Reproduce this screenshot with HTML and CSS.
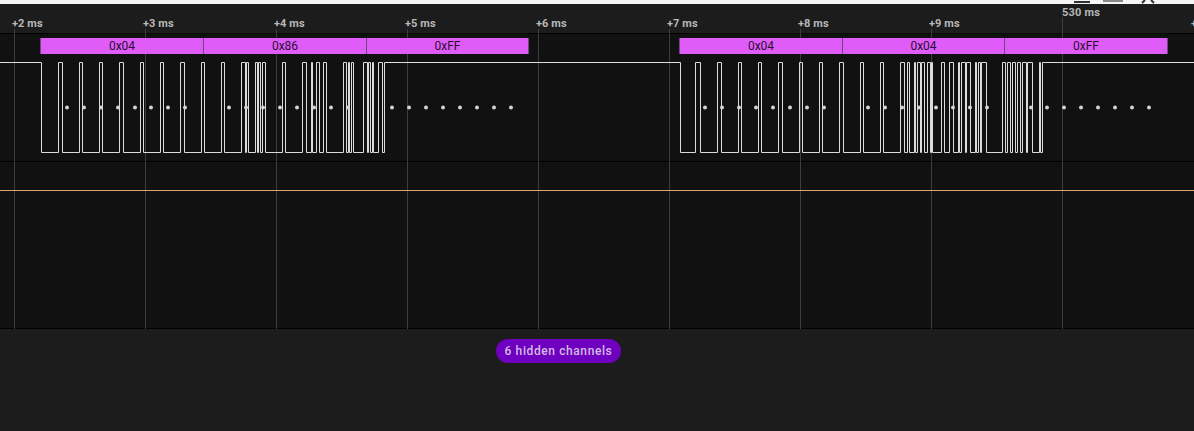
FILE: index.html
```html
<!DOCTYPE html>
<html lang="en">
<head>
    <meta charset="UTF-8">
    <title>Logic analyzer capture</title>
    <link rel="stylesheet" href="styles.css">
</head>
<body>
    <div class="topline"></div>

    <!-- window buttons, cut off by the top of the page -->
    <svg class="window-icons" width="134" height="4" viewBox="0 0 134 4">
        <rect x="14" y="1" width="16" height="2" fill="#333"/>
        <rect x="43" y="0" width="20" height="2" fill="#888"/>
        <path d="M82 3 L85 0 M94 3 L91 0" stroke="#333" stroke-width="2"/>
    </svg>

    <div class="ruler">
        <span class="tick-label">+2 ms</span>
        <span class="tick-label">+3 ms</span>
        <span class="tick-label">+4 ms</span>
        <span class="tick-label">+5 ms</span>
        <span class="tick-label">+6 ms</span>
        <span class="tick-label">+7 ms</span>
        <span class="tick-label">+8 ms</span>
        <span class="tick-label">+9 ms</span>
        <span class="tick-label tick-skip"></span>
        <span class="tick-label">+</span>
        <span class="abs-time">530 ms</span>
    </div>

    <div class="tracks">
        <div class="track track-spi">
            <div class="decode">
                <div class="byte-group first">
                    <div class="byte">0x04</div>
                    <div class="byte">0x86</div>
                    <div class="byte">0xFF</div>
                </div>
                <div class="byte-group second">
                    <div class="byte">0x04</div>
                    <div class="byte byte-short">0x04</div>
                    <div class="byte byte-long">0xFF</div>
                </div>
            </div>
        </div>
        <div class="track track-flat"></div>

        <!-- grid, waveform and sample dots drawn over both tracks -->
        <svg class="scope" width="1194" height="312" viewBox="0 17 1194 312">
            <g stroke="#3c3c42" stroke-width="1">
                <path d="M14.5 29V329M145.5 29V329M276.5 29V329M407.5 29V329M538.5 29V329M669.5 29V329M800.5 29V329M931.5 29V329M1062.5 17V329"/>
            </g>
            <path d="M0 190.5H1194" stroke="#e0a870" stroke-width="1"/>
            <path id="wave" fill="none" stroke="#dcdcdc" stroke-width="1" d="M0 62.5H41.5V152.5H58.5V62.5H62.5V152.5H79.5V62.5H82.5V152.5H99.5V62.5H102.5V152.5H119.5V62.5H123.5V152.5H140.5V62.5H143.5V152.5H160.5V62.5H163.5V152.5H180.5V62.5H184.5V152.5H201.5V62.5H204.5V152.5H221.5V62.5H224.5V152.5H241.5V62.5H245.5V152.5H246.5V62.5H248.5V152.5H255.5V62.5H257.5V152.5H258.5V62.5H260.5V152.5H262.5V62.5H265.5V152.5H282.5V62.5H285.5V152.5H302.5V62.5H306.5V152.5H311.5V62.5H312.5V152.5H316.5V62.5H319.5V152.5H323.5V62.5H326.5V152.5H343.5V62.5H346.5V152.5H348.5V62.5H349.5V152.5H351.5V62.5H353.5V152.5H363.5V62.5H367.5V152.5H368.5V62.5H370.5V152.5H372.5V62.5H373.5V152.5H378.5V62.5H382.5V152.5H384.5V62.5H680.5V152.5H695.5V62.5H700.5V152.5H717.5V62.5H721.5V152.5H738.5V62.5H741.5V152.5H758.5V62.5H761.5V152.5H778.5V62.5H782.5V152.5H799.5V62.5H802.5V152.5H819.5V62.5H822.5V152.5H839.5V62.5H843.5V152.5H860.5V62.5H863.5V152.5H880.5V62.5H883.5V152.5H900.5V62.5H904.5V152.5H907.5V62.5H909.5V152.5H914.5V62.5H915.5V152.5H917.5V62.5H920.5V152.5H921.5V62.5H924.5V152.5H927.5V62.5H930.5V152.5H931.5V62.5H932.5V152.5H941.5V62.5H944.5V152.5H949.5V62.5H953.5V152.5H958.5V62.5H959.5V152.5H961.5V62.5H965.5V152.5H966.5V62.5H970.5V152.5H975.5V62.5H976.5V152.5H978.5V62.5H980.5V152.5H981.5V62.5H986.5V152.5H1002.5V62.5H1005.5V152.5H1007.5V62.5H1010.5V152.5H1012.5V62.5H1015.5V152.5H1017.5V62.5H1020.5V152.5H1022.5V62.5H1026.5V152.5H1027.5V62.5H1032.5V152.5H1039.5V62.5H1040.5V152.5H1042.5V62.5H1194"/>
            <g fill="#d4d4d4">
                <circle cx="67" cy="107.5" r="2"/><circle cx="84" cy="107.5" r="2"/><circle cx="101" cy="107.5" r="2"/><circle cx="118" cy="107.5" r="2"/><circle cx="135" cy="107.5" r="2"/><circle cx="151" cy="107.5" r="2"/><circle cx="168" cy="107.5" r="2"/><circle cx="185" cy="107.5" r="2"/>
                <circle cx="229" cy="107.5" r="2"/><circle cx="246" cy="107.5" r="2"/><circle cx="263" cy="107.5" r="2"/><circle cx="280" cy="107.5" r="2"/><circle cx="297" cy="107.5" r="2"/><circle cx="314" cy="107.5" r="2"/><circle cx="331" cy="107.5" r="2"/><circle cx="348" cy="107.5" r="2"/>
                <circle cx="392" cy="107.5" r="2"/><circle cx="409" cy="107.5" r="2"/><circle cx="426" cy="107.5" r="2"/><circle cx="443" cy="107.5" r="2"/><circle cx="460" cy="107.5" r="2"/><circle cx="477" cy="107.5" r="2"/><circle cx="494" cy="107.5" r="2"/><circle cx="511" cy="107.5" r="2"/>
                <circle cx="705" cy="107.5" r="2"/><circle cx="722" cy="107.5" r="2"/><circle cx="739" cy="107.5" r="2"/><circle cx="756" cy="107.5" r="2"/><circle cx="773" cy="107.5" r="2"/><circle cx="790" cy="107.5" r="2"/><circle cx="807" cy="107.5" r="2"/><circle cx="824" cy="107.5" r="2"/>
                <circle cx="868" cy="107.5" r="2"/><circle cx="885" cy="107.5" r="2"/><circle cx="902" cy="107.5" r="2"/><circle cx="919" cy="107.5" r="2"/><circle cx="936" cy="107.5" r="2"/><circle cx="953" cy="107.5" r="2"/><circle cx="970" cy="107.5" r="2"/><circle cx="987" cy="107.5" r="2"/>
                <circle cx="1031" cy="107.5" r="2"/><circle cx="1047" cy="107.5" r="2"/><circle cx="1064" cy="107.5" r="2"/><circle cx="1081" cy="107.5" r="2"/><circle cx="1098" cy="107.5" r="2"/><circle cx="1115" cy="107.5" r="2"/><circle cx="1132" cy="107.5" r="2"/><circle cx="1149" cy="107.5" r="2"/>
            </g>
        </svg>
    </div>

    <div class="footer">
        <button class="hidden-pill">6 hidden channels</button>
    </div>
</body>
</html>
```

FILE: styles.css
```css
* {
    margin: 0;
    padding: 0;
    box-sizing: border-box;
}

body {
    width: 1194px;
    height: 431px;
    overflow: hidden;
    position: relative;
    font-family: Roboto, "Liberation Sans", sans-serif;
    background-color: #1c1c1c;
}

.topline {
    height: 4px;
    background-color: #f5f5f5;
}

.window-icons {
    position: absolute;
    top: 0;
    left: 1060px;
}

/* Time ruler */
.ruler {
    position: relative;
    display: flex;
    height: 30px;
    padding: 13px 0 0 12px;
    background-color: #1c1c1c;
    border-bottom: 1px solid #000;
}

.tick-label {
    flex: 0 0 131px;
    font-size: 11px;
    line-height: 13px;
    font-weight: 700;
    letter-spacing: 0.1px;
    color: #b8b8b8;
}

.abs-time {
    position: absolute;
    top: 2px;
    left: 1062px;
    font-size: 11px;
    line-height: 13px;
    font-weight: 700;
    letter-spacing: 0.2px;
    color: #b8b8b8;
}

/* Channel tracks */
.tracks {
    position: relative;
}

.track {
    background-color: #111;
    border-bottom: 1px solid #000;
}

.track-spi {
    height: 128px;
}

.track-flat {
    height: 167px;
}

.scope {
    position: absolute;
    top: -17px;
    left: 0;
    z-index: 1;
}

.decode {
    position: relative;
    z-index: 2;
    display: flex;
    padding: 4px 0 0 40px;
}

.byte-group {
    display: flex;
    height: 16px;
}

.byte-group.second {
    margin-left: 150px;
}

.byte {
    width: 163px;
    background-color: #e05cf8;
    border-left: 1px solid #6d4a78;
    font-size: 12px;
    line-height: 16px;
    text-align: center;
    color: #2a1030;
}

.byte-short {
    width: 162px;
}

.byte-long {
    width: 164px;
}

.byte:last-child {
    border-right: 1px solid #6d4a78;
}

/* Bottom area */
.footer {
    display: flex;
    padding: 10px 0 0 496px;
}

.hidden-pill {
    width: 125px;
    height: 24px;
    border: none;
    border-radius: 12px;
    background-color: #7000c0;
    color: #d0bce4;
    font-family: inherit;
    font-size: 12px;
    font-weight: 500;
    letter-spacing: 0.6px;
}
```
